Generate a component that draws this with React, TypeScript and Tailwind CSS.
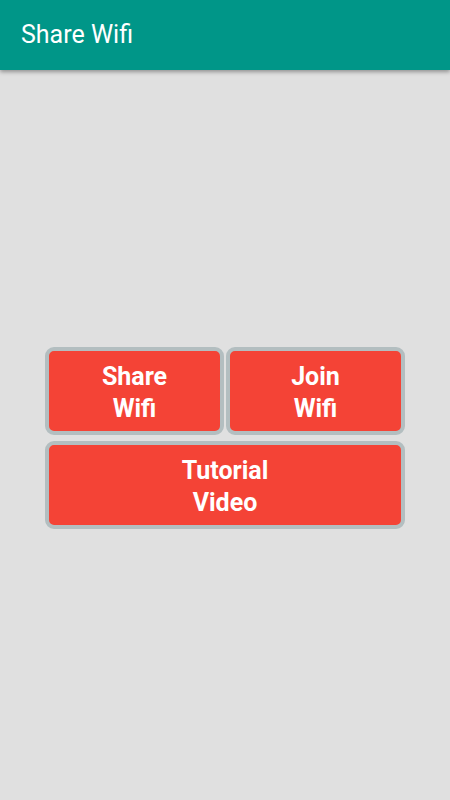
export default function App() {
  return (
    <div
      className="flex min-h-[800px] w-full flex-col bg-[#e0e0e0]"
      style={{ fontFamily: "Roboto, 'Noto Sans', sans-serif" }}
    >
      <header className="relative z-10 flex h-[70px] items-center bg-[#009688] px-[21px] shadow-[0_2px_4px_rgba(0,0,0,0.35)]">
        <h1 className="text-[25px] font-normal text-white">Share Wifi</h1>
      </header>
      <main className="flex flex-1 flex-col items-center justify-center pt-[6px]">
        <div className="flex w-[360px] flex-col gap-[6px]">
          <div className="grid grid-cols-2 gap-[2px]">
            <WifiButton label="Share" sub="Wifi" />
            <WifiButton label="Join" sub="Wifi" />
          </div>
          <WifiButton label="Tutorial" sub="Video" />
        </div>
      </main>
    </div>
  );
}

function WifiButton({ label, sub }: { label: string; sub: string }) {
  return (
    <button
      type="button"
      className="flex h-[88px] flex-col items-center justify-center rounded-[9px] border-[4px] border-[#b3bec0] bg-[#f44336] pt-[4px] text-[25px] font-bold leading-[32px] text-white"
    >
      <span>{label}</span>
      <span>{sub}</span>
    </button>
  );
}
